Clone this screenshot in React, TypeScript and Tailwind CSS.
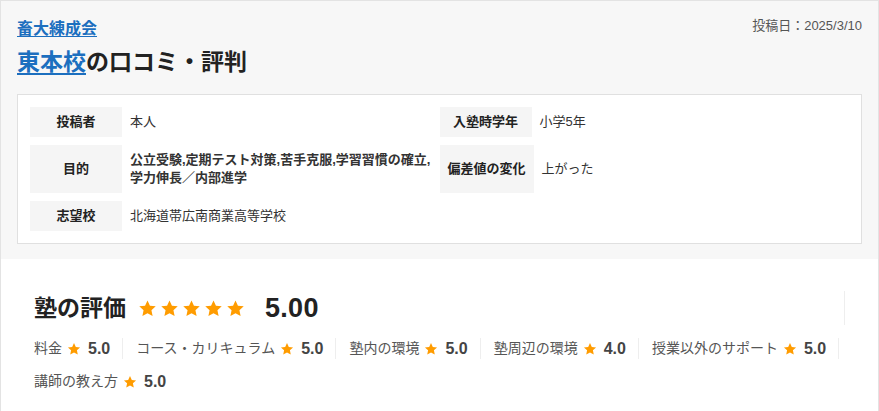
import React from "react";

const Star = ({ size }: { size: number }) => (
  <svg width={size} height={size} viewBox="0 0 24 24" className="shrink-0">
    <path
      d="M12 1.8l3.09 6.68 7.31.83-5.43 4.98 1.48 7.21L12 17.9l-6.45 3.6 1.48-7.21L1.6 9.31l7.31-.83z"
      fill="#ff9c00"
    />
  </svg>
);

const rows: { label: string; value: string; bold?: boolean }[] = [
  { label: "投稿者", value: "本人" },
  { label: "入塾時学年", value: "小学5年" },
  { label: "目的", value: "公立受験,定期テスト対策,苦手克服,学習習慣の確立,学力伸長／内部進学", bold: true },
  { label: "偏差値の変化", value: "上がった" },
  { label: "志望校", value: "北海道帯広南商業高等学校" },
];

const subs = [
  { label: "料金", value: "5.0" },
  { label: "コース・カリキュラム", value: "5.0" },
  { label: "塾内の環境", value: "5.0" },
  { label: "塾周辺の環境", value: "4.0" },
  { label: "授業以外のサポート", value: "5.0" },
  { label: "講師の教え方", value: "5.0" },
];

export default function App() {
  return (
    <div
      className="w-full border-l border-t border-r border-[#e3e3e3] bg-white text-[#333]"
      style={{ fontFamily: "'Liberation Sans', 'Noto Sans CJK JP', sans-serif" }}
    >
      <div className="bg-[#f7f7f7] px-4 pt-4 pb-[15px]">
        <div className="flex items-start justify-between">
          <a className="text-[16px] leading-6 font-bold text-[#1c6fbf] underline underline-offset-2">
            畜大練成会
          </a>
          <div className="mt-[-1px] text-[13px] leading-5 text-[#555]">投稿日：2025/3/10</div>
        </div>
        <h1 className="mt-[5px] text-[23px] leading-8 font-bold text-[#222]">
          <a className="text-[#1c6fbf] underline underline-offset-[3px]">東本校</a>の口コミ・評判
        </h1>
        <div className="mt-4 border border-[#e0e0e0] bg-white p-3">
          <div className="grid grid-cols-2 gap-y-2">
            {rows.map((r) => (
              <div key={r.label} className="flex items-stretch">
                <div className="flex min-w-[92px] items-center justify-center whitespace-nowrap bg-[#f5f5f5] px-2 text-[13px] font-bold text-[#222]">
                  {r.label}
                </div>
                <div
                  className={`flex items-center py-[6px] pl-2 text-[13px] leading-[18px] text-[#333] ${r.bold ? "font-bold" : ""}`}
                >
                  {r.value}
                </div>
              </div>
            ))}
          </div>
        </div>
      </div>
      <div className="px-[33px] pt-8 pb-5">
        <div className="flex h-[34px] items-center border-r border-[#eeeeee]">
          <span className="text-[23px] font-bold text-[#222]">塾の評価</span>
          <div className="ml-3 flex gap-[3px]">
            {[0, 1, 2, 3, 4].map((i) => (
              <Star key={i} size={19} />
            ))}
          </div>
          <span className="ml-5 text-[27px] font-semibold tracking-[0.3px] text-[#222]">5.00</span>
        </div>
        <div className="mt-[13px] -mr-6 flex flex-wrap gap-y-3">
          {subs.map((s, i) => (
            <div
              key={s.label}
              className={`flex h-[21px] items-center ${i === subs.length - 1 ? "" : "mr-[13px] border-r border-[#eeeeee] pr-3"}`}
            >
              <span className="text-[14px] text-[#555]">{s.label}</span>
              <span className="ml-[5px]">
                <Star size={14} />
              </span>
              <span className="ml-[7px] text-[16px] font-bold text-[#444]">{s.value}</span>
            </div>
          ))}
        </div>
      </div>
    </div>
  );
}
